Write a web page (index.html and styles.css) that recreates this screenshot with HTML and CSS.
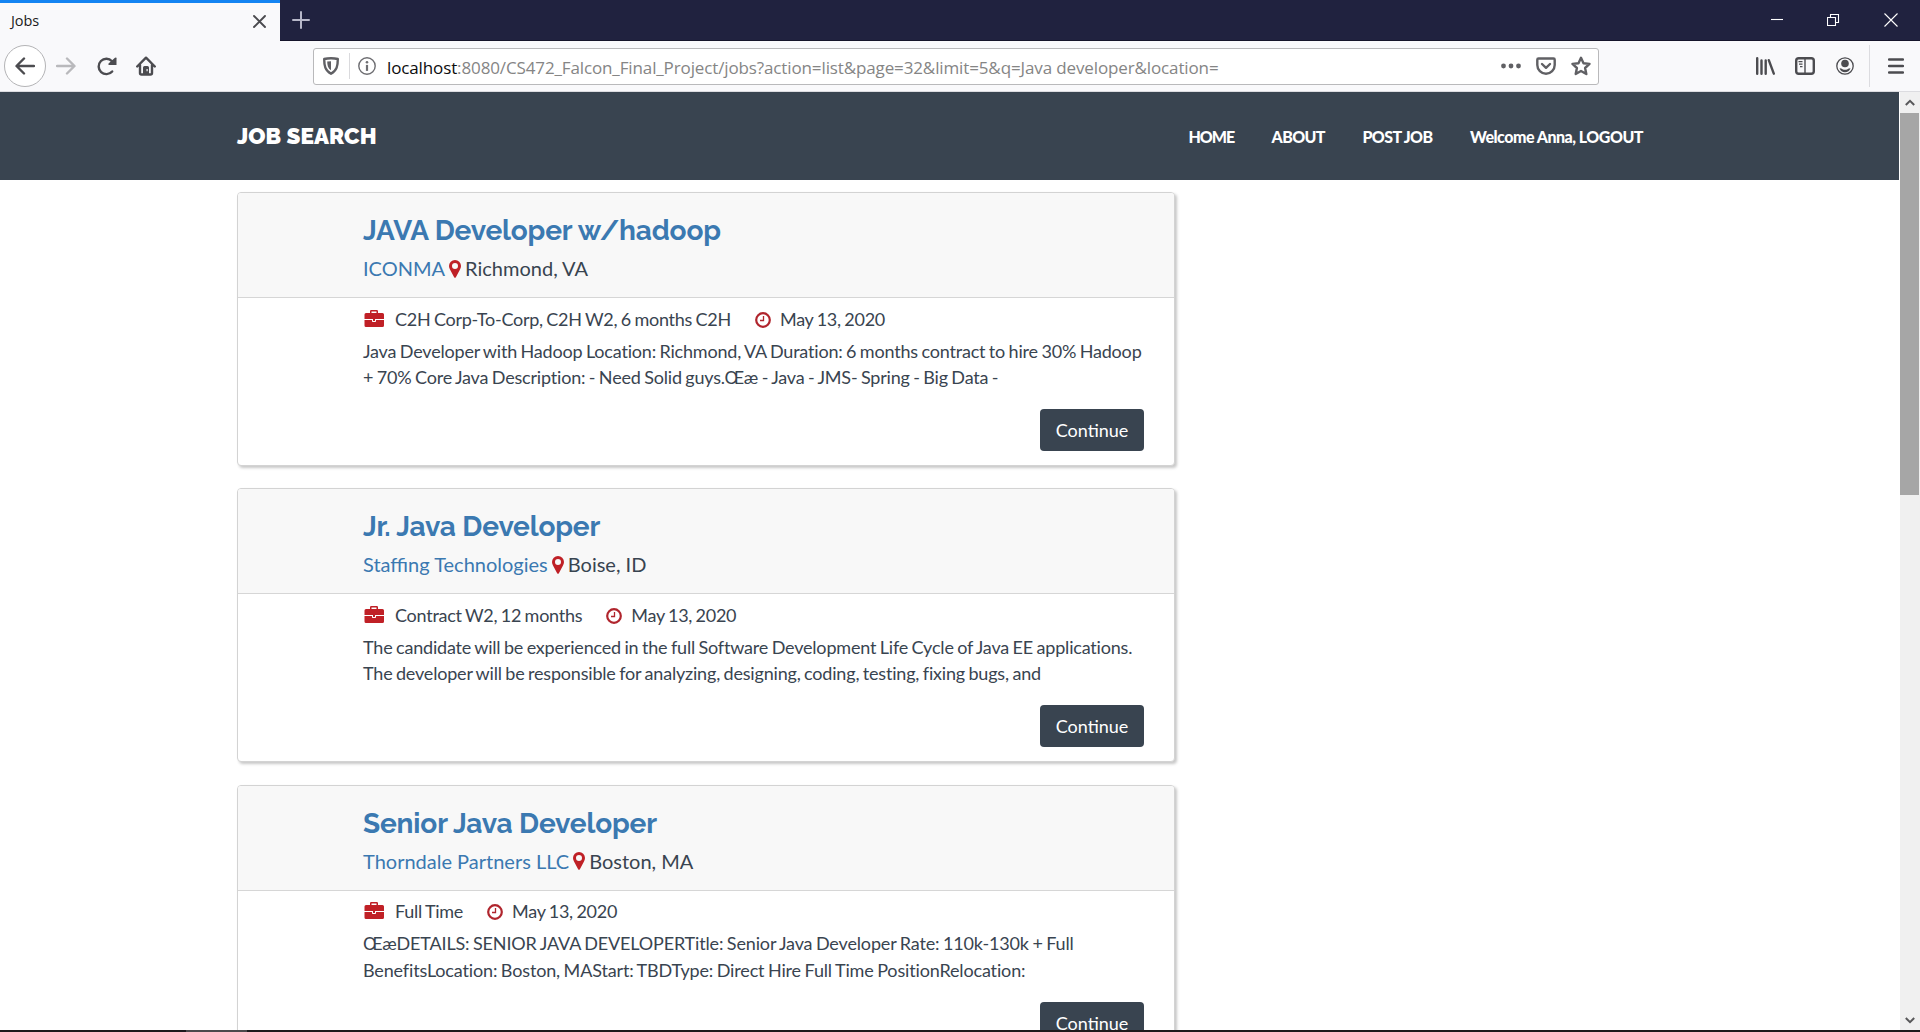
FILE: index.html
```html
<!DOCTYPE html>
<html lang="en">
<head>
<meta charset="utf-8">
<title>Jobs</title>
<link rel="stylesheet" href="styles.css">
</head>
<body>
<svg class="sprite" aria-hidden="true">
  <symbol id="pin" viewBox="0 0 12 18"><path fill-rule="evenodd" d="M6 0a6 6 0 0 1 6 6c0 1.300-.4 2.400-1 3.500L7 17q-1 1.700-2 0L1 9.500C.4 8.400 0 7.300 0 6a6 6 0 0 1 6-6zm0 3a3 3 0 1 0 0 6 3 3 0 0 0 0-6z"/></symbol>
  <symbol id="case" viewBox="0 0 20 17"><path fill-rule="evenodd" d="M6 3V1.200Q6 0 7.200 0h5.600Q14 0 14 1.200V3h4.500Q20 3 20 4.500V9H.5V4.500Q.5 3 2 3zm1.500 0h5V1.500h-5z"/><path d="M.5 10H8v1.200q0 .8.800.8h2.400q.8 0 .8-.8V10h8v5.500q0 1.500-1.500 1.500H2Q.5 17 .5 15.500z"/><path d="M9 9h2v2H9z"/></symbol>
  <symbol id="clock" viewBox="0 0 16 16"><circle cx="8" cy="8" r="6.800" fill="none" stroke="currentColor" stroke-width="2.200"/><path d="M8.500 4v4.500H5" fill="none" stroke="currentColor" stroke-width="1.300"/></symbol>
</svg>

<div class="tabbar">
  <div class="tab"><span class="tab-title">Jobs</span>
    <svg width="13" height="13" viewBox="0 0 13 13"><path d="M1 1l11 11M12 1L1 12" class="st"/></svg>
  </div>
  <svg class="newtab" width="18" height="18" viewBox="0 0 18 18"><path d="M9 1v16M1 9h16"/></svg>
  <div class="winctl">
    <svg width="12" height="14" viewBox="0 0 12 14"><path d="M0 6.500h12"/></svg>
    <svg width="13" height="14" viewBox="0 0 13 14"><path d="M.5 4.500h8v8h-8zM3.500 4.500v-3h8v8h-3"/></svg>
    <svg width="14" height="14" viewBox="0 0 14 14"><path d="M.5.5l13 13M13.500.5l-13 13"/></svg>
  </div>
</div>

<div class="toolbar">
  <div class="back"><svg width="20" height="18" viewBox="0 0 20 18"><path class="st" d="M19 9H2M9 1.500L1.500 9 9 16.500"/></svg></div>
  <svg class="fwd" width="20" height="18" viewBox="0 0 20 18"><path class="st" d="M1 9h17M11 1.500L18.500 9 11 16.500"/></svg>
  <svg class="reload" width="20" height="19" viewBox="0 0 20 19"><path class="st" d="M15.200 14.500A7.700 7.700 0 1 1 15 4.200"/><path d="M11.500 8V6.500L18 .8q1.500-1 1.500.5V8z"/></svg>
  <svg class="home" width="20" height="20" viewBox="0 0 20 20"><path class="st" d="M1.200 10.500L10 1.700l8.800 8.800M4 9v8q0 1.500 1.500 1.500h9q1.500 0 1.500-1.500V9"/><path fill-rule="evenodd" d="M7 18v-6.500Q7 10 8.500 10h3q1.500 0 1.500 1.500V18zm3.500-5v2.200h1.200V13z"/></svg>
  <div class="urlbar">
    <svg class="shield" width="16" height="18" viewBox="0 0 16 18"><path class="st" d="M8 1.200c2.500 0 5 .3 6.800.8 0 6.500-.8 11.500-6.800 14.700C2 13.500 1.200 8.500 1.200 2 3 1.500 5.500 1.200 8 1.200z"/><path d="M8 4.300v9C5 11.500 4.300 8.500 4.200 4.600z"/></svg>
    <span class="sep"></span>
    <svg class="info" width="18" height="18" viewBox="0 0 18 18"><circle cx="9" cy="9" r="8.200" fill="none" stroke="currentColor" stroke-width="1.400"/><circle cx="9" cy="5.200" r="1.300"/><path d="M7.900 7.900h2.200v6H7.900z"/></svg>
    <span class="url"><b>localhost</b>:8080/CS472_Falcon_Final_Project/jobs?action=list&amp;page=32&amp;limit=5&amp;q=Java developer&amp;location=</span>
    <svg class="dots" width="20" height="6" viewBox="0 0 20 6"><circle cx="2.500" cy="3" r="2.400"/><circle cx="10" cy="3" r="2.400"/><circle cx="17.500" cy="3" r="2.400"/></svg>
    <svg class="pocket" width="20" height="18" viewBox="0 0 20 18"><path class="st" d="M2.500 1.500h15q1.200 0 1.200 1.200V8a8.700 8.700 0 0 1-17.400 0V2.700q0-1.200 1.200-1.200z"/><path class="st" d="M6 7l4 3.800L14 7"/></svg>
    <svg class="star" width="20" height="20" viewBox="0 0 20 20"><path class="st" d="M10 1.800l2.500 5.400 6 .7-4.400 4.100 1.200 6L10 15l-5.300 3 1.200-6L1.500 7.900l6-.7z"/></svg>
  </div>
  <svg class="library" width="19" height="18" viewBox="0 0 19 18"><path class="st" d="M1.200 1.200v15.600M5.500 3.500v13.300M9.700 3.500v13.300M12.800 3.200L17.800 16.700"/></svg>
  <svg class="sidebar" width="20" height="18" viewBox="0 0 20 18"><rect class="st" x="1.200" y="1.200" width="17.600" height="15.600" rx="2.500"/><path d="M9.300 1h1.400v16H9.300zM3.500 4h4v1.200h-4zM4 6.500h3.500v1.200H4zM5 9h2.500v1.200H5z"/></svg>
  <svg class="account" width="18" height="18" viewBox="0 0 18 18"><circle cx="9" cy="9" r="8.200" fill="none" stroke="currentColor" stroke-width="1.300"/><circle cx="9" cy="6.500" r="3.800"/><path d="M3.500 11.300q2 0 3 1 2.500 1 5 0 1-1 3-1-1.500 4-5.500 4t-5.500-4z"/></svg>
  <span class="menu-sep"></span>
  <svg class="menu" width="16" height="16" viewBox="0 0 16 16"><path class="st" d="M1 1.500h14M1 8h14M1 14.500h14"/></svg>
</div>

<div class="viewport">
  <div class="page">
    <header class="site-header">
      <a class="brand">JOB SEARCH</a>
      <nav><a class="nav-home">HOME</a><a>ABOUT</a><a>POST JOB</a><a class="nav-user">Welcome Anna, LOGOUT</a></nav>
    </header>
    <main>
      <article class="card">
        <div class="card-head">
          <h3>JAVA Developer w/hadoop</h3>
          <p><a>ICONMA</a><svg class="pin"><use href="#pin"/></svg>Richmond, VA</p>
        </div>
        <div class="card-body">
          <div class="meta"><svg class="case"><use href="#case"/></svg><span>C2H Corp-To-Corp, C2H W2, 6 months C2H</span><svg class="clock"><use href="#clock"/></svg><span>May 13, 2020</span></div>
          <p class="desc">Java Developer with Hadoop Location: Richmond, VA Duration: 6 months contract to hire 30% Hadoop<br>+ 70% Core Java Description: - Need Solid guys.Œæ - Java - JMS- Spring - Big Data -</p>
          <a class="btn">Continue</a>
        </div>
      </article>
      <article class="card">
        <div class="card-head">
          <h3>Jr. Java Developer</h3>
          <p><a>Staffing Technologies</a><svg class="pin"><use href="#pin"/></svg>Boise, ID</p>
        </div>
        <div class="card-body">
          <div class="meta"><svg class="case"><use href="#case"/></svg><span>Contract W2, 12 months</span><svg class="clock"><use href="#clock"/></svg><span>May 13, 2020</span></div>
          <p class="desc">The candidate will be experienced in the full Software Development Life Cycle of Java EE applications.<br>The developer will be responsible for analyzing, designing, coding, testing, fixing bugs, and</p>
          <a class="btn">Continue</a>
        </div>
      </article>
      <article class="card">
        <div class="card-head">
          <h3>Senior Java Developer</h3>
          <p><a>Thorndale Partners LLC</a><svg class="pin"><use href="#pin"/></svg>Boston, MA</p>
        </div>
        <div class="card-body">
          <div class="meta"><svg class="case"><use href="#case"/></svg><span>Full Time</span><svg class="clock"><use href="#clock"/></svg><span>May 13, 2020</span></div>
          <p class="desc loose">ŒæDETAILS: SENIOR JAVA DEVELOPERTitle: Senior Java Developer Rate: 110k-130k + Full<br>BenefitsLocation: Boston, MAStart: TBDType: Direct Hire Full Time PositionRelocation:</p>
          <a class="btn">Continue</a>
        </div>
      </article>
    </main>
  </div>
  <div class="scrollbar">
    <svg width="10" height="7" viewBox="0 0 10 7"><path d="M.8 6L5 1.800 9.200 6"/></svg>
    <div class="thumb"></div>
    <svg class="down" width="10" height="7" viewBox="0 0 10 7"><path d="M.8 1L5 5.200 9.200 1"/></svg>
  </div>
</div>
<div class="taskbar"><span></span></div>
</body>
</html>
```
FILE: styles.css
```css
* { box-sizing: border-box; }
body {
  margin: 0;
  width: 1920px;
  height: 1032px;
  overflow: hidden;
  display: flex;
  flex-direction: column;
  background: #fff;
  font-family: Lato, "Open Sans", sans-serif;
  color: #394450;
}
h3, p { margin: 0; font-weight: 400; }
svg { flex: none; fill: currentColor; }
.sprite { position: absolute; width: 0; height: 0; }
.st { fill: none; stroke: currentColor; stroke-width: 2.400; stroke-linecap: round; stroke-linejoin: round; }

/* Browser chrome */
.tabbar {
  height: 41px;
  flex: none;
  display: flex;
  background: #20223f;
  border-bottom: 1px solid #15142a;
}
.tab {
  width: 280px;
  height: 41px;
  padding: 0 14px 2px 11px;
  display: flex;
  align-items: center;
  justify-content: space-between;
  background: #f9f9fb;
  border-top: 3px solid #1484f2;
  color: #4a4a4e;
}
.tab .st { stroke-width: 1.900; }
.tab-title { font: 14.500px/20px "Open Sans", sans-serif; letter-spacing: -.1px; color: #1b1b20; }
.newtab { margin: 11px 0 0 12px; fill: none; stroke: #b7b8c9; stroke-width: 2; stroke-linecap: round; }
.winctl { margin-left: auto; padding: 13px 22px 0 0; display: flex; gap: 44px; }
.winctl svg { fill: none; stroke: #fff; stroke-width: 1.100; }

.toolbar {
  height: 51px;
  flex: none;
  display: flex;
  align-items: center;
  padding: 0 16px 0 4px;
  background: #f9f9fb;
  border-bottom: 1px solid #dcdce0;
  color: #4c4c50;
}
.back {
  width: 42px;
  height: 42px;
  display: flex;
  align-items: center;
  justify-content: center;
  background: #fff;
  border: 1px solid #b4b4b6;
  border-radius: 50%;
}
.fwd { margin-left: 10px; color: #b9b9bc; }
.reload { margin-left: 21px; }
.home { margin-left: 19px; }
.urlbar {
  width: 1286px;
  height: 37px;
  margin-left: 157px;
  padding: 0 7px 0 9px;
  display: flex;
  align-items: center;
  background: #fff;
  border: 1px solid #b9b9bb;
  border-radius: 3px;
  color: #606064;
}
.sep { width: 1px; height: 26px; margin: 0 8px 0 10px; background: #dadadd; }
.info { color: #6e6e72; }
.url {
  flex: 1;
  margin-left: 11px;
  padding-top: 3px;
  white-space: nowrap;
  font: 17px/24px "Open Sans", sans-serif;
  letter-spacing: -.125px;
  color: #858585;
}
.url b { font-weight: 400; color: #0c0c0d; }
.pocket { margin-left: 15px; }
.star { margin-left: 15px; }
.library { margin-left: 157px; }
.sidebar { margin-left: 20px; }
.account { margin-left: 21px; }
.menu-sep { width: 1px; height: 42px; margin-left: 15px; background: #dcdce0; }
.menu { margin-left: auto; }

/* Page */
.viewport { height: 938px; flex: none; display: flex; overflow: hidden; }
.page { width: 1899px; overflow: hidden; }
.site-header {
  height: 88px;
  padding: 0 256px 0 237px;
  display: flex;
  align-items: center;
  justify-content: space-between;
  background: #394450;
  color: #fff;
  white-space: nowrap;
}
.brand { font: 900 22.500px/30px Raleway, Lato, sans-serif; letter-spacing: .1px; }
nav { display: flex; gap: 37.500px; padding-top: 1px; font: 900 16px/24px Lato, sans-serif; letter-spacing: -.6px; }
.nav-home { letter-spacing: -1.050px; }
.nav-user { letter-spacing: -.5px; }

main { padding: 12px 0 0 237px; display: flex; flex-direction: column; gap: 22.400px; }
.card {
  width: 938px;
  height: 274px;
  flex: none;
  background: #fff;
  border: 1px solid #d3d3d3;
  border-radius: 4px;
  box-shadow: 2px 2px 3px rgba(0, 0, 0, .22);
  white-space: nowrap;
}
.card-head {
  height: 105px;
  padding: 20px 0 0 125px;
  background: #f8f8f8;
  border-bottom: 1px solid #d6d6d6;
  border-radius: 3px 3px 0 0;
}
.card-head h3 { font: 700 28px/36px Raleway, Lato, sans-serif; letter-spacing: -.160px; color: #3b79b1; }
.card-head p { margin-top: -1px; display: flex; align-items: center; font-size: 20px; line-height: 40px; }
.card-head a { color: #3b79b1; }
.pin { width: 12px; height: 18px; margin: 1px 4px 0; color: #bf2026; }
.card-body { padding: 0 30px 0 125px; display: flex; flex-direction: column; }
.meta {
  height: 39.500px;
  padding-top: 1.500px;
  display: flex;
  align-items: center;
  font-size: 18px;
  line-height: 32px;
  letter-spacing: -.26px;
  word-spacing: -.9px;
}
.case { width: 20px; height: 17px; margin: -1px 11px 0 1px; color: #c02026; }
.clock { width: 16px; height: 16px; margin: 2px 9px 0 24px; color: #b0252d; }
.desc { font-size: 18px; line-height: 26.400px; letter-spacing: -.19px; word-spacing: -.9px; }
.desc.loose { letter-spacing: -.15px; }
.btn {
  align-self: flex-end;
  width: 104px;
  height: 42px;
  margin-top: 18.500px;
  background: #394450;
  border-radius: 4px;
  color: #fff;
  font-size: 18px;
  line-height: 43px;
  text-align: center;
}

.scrollbar { width: 21px; padding-right: 1px; display: flex; flex-direction: column; align-items: center; background: #f0f0f0; border-left: 1px solid #fff; }
.scrollbar svg { margin-top: 7px; fill: none; stroke: #58585a; stroke-width: 2; }
.thumb { width: 19px; height: 382px; margin-top: 7px; background: #a6a6a6; }
.scrollbar .down { margin: auto 0 6px; }
.taskbar { height: 2px; flex: none; background: #1c1a1d; }
.taskbar span { display: block; width: 61px; height: 2px; margin-left: 186px; background: #4b494c; }
```
